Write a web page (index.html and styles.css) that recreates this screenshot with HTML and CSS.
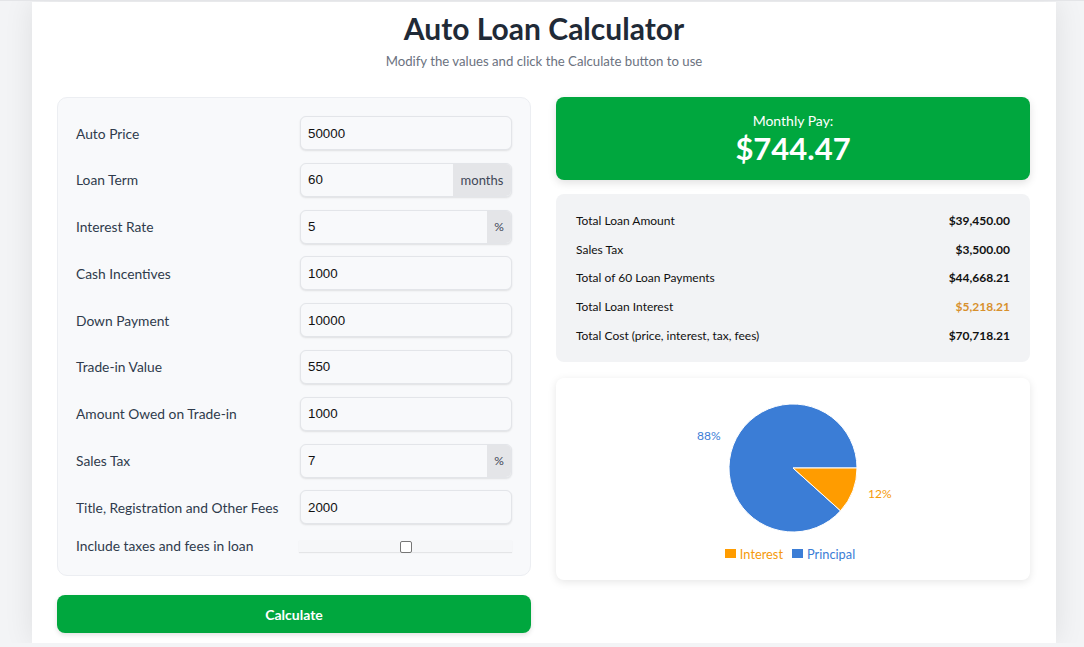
FILE: index.html
```html
<!DOCTYPE html>
<html lang="en">
<head>
<meta charset="utf-8">
<title>Auto Loan Calculator</title>
<link rel="stylesheet" href="styles.css">
</head>
<body>
<main class="page">
  <header class="head">
    <h1 class="title">Auto Loan Calculator</h1>
    <p class="subtitle">Modify the values and click the Calculate button to use</p>
  </header>
  <div class="columns">
    <section class="left">
      <div class="form">
        <label class="lbl">Auto Price</label>
        <div class="field"><span class="val">50000</span></div>
        <label class="lbl">Loan Term</label>
        <div class="field group"><span class="val">60</span><span class="addon months">months</span></div>
        <label class="lbl">Interest Rate</label>
        <div class="field group"><span class="val">5</span><span class="addon pct">%</span></div>
        <label class="lbl">Cash Incentives</label>
        <div class="field"><span class="val">1000</span></div>
        <label class="lbl">Down Payment</label>
        <div class="field"><span class="val">10000</span></div>
        <label class="lbl">Trade-in Value</label>
        <div class="field"><span class="val">550</span></div>
        <label class="lbl">Amount Owed on Trade-in</label>
        <div class="field"><span class="val">1000</span></div>
        <label class="lbl">Sales Tax</label>
        <div class="field group"><span class="val">7</span><span class="addon pct">%</span></div>
        <label class="lbl">Title, Registration and Other Fees</label>
        <div class="field"><span class="val">2000</span></div>
        <label class="lbl">Include taxes and fees in loan</label>
        <div class="checkwrap"><span class="checkbox"></span></div>
      </div>
      <button class="calc">Calculate</button>
    </section>
    <section class="right">
      <div class="monthly">
        <div class="m-label">Monthly Pay:</div>
        <div class="m-value">$744.47</div>
      </div>
      <div class="details">
        <div class="row"><span>Total Loan Amount</span><b>$39,450.00</b></div>
        <div class="row"><span>Sales Tax</span><b>$3,500.00</b></div>
        <div class="row"><span>Total of 60 Loan Payments</span><b>$44,668.21</b></div>
        <div class="row"><span>Total Loan Interest</span><b class="orange">$5,218.21</b></div>
        <div class="row"><span>Total Cost (price, interest, tax, fees)</span><b>$70,718.21</b></div>
      </div>
      <div class="chart">
        <svg class="pie" width="474" height="166" viewBox="0 0 474 166">
          <path d="M237 90 L301 90 A64 64 0 1 0 284.56 132.82 Z" fill="#3b7dd6" stroke="#fff" stroke-width="1"/>
          <path d="M237 90 L301 90 A64 64 0 0 1 284.56 132.82 Z" fill="#ff9c00" stroke="#fff" stroke-width="1"/>
          <text x="141" y="62" class="plabel blue-t">88%</text>
          <text x="312" y="120" class="plabel orange-t">12%</text>
        </svg>
        <div class="legend">
          <span class="swatch sw-orange"></span><span class="lg-orange">Interest</span>
          <span class="swatch sw-blue"></span><span class="lg-blue">Principal</span>
        </div>
      </div>
    </section>
  </div>
</main>
</body>
</html>
```
FILE: styles.css
```css
* { box-sizing: border-box; }
html, body { margin: 0; padding: 0; }
body {
  background: #f3f4f6;
  font-family: "Lato", "Noto Sans", sans-serif;
  border-top: 1px solid #e4e5e8;
  padding-left: 4px;
}
.page {
  width: 1024px;
  margin: 1px auto 0;
  background: #fff;
  box-shadow: 0 0 28px rgba(0,0,0,0.09);
  padding: 0 25px 10px;
}
.head { text-align: center; padding-top: 10px; }
.title {
  margin: 0;
  font-size: 30px;
  line-height: 32px;
  font-weight: 700;
  color: #1f2a37;
}
.subtitle {
  margin: 9px 0 0;
  font-size: 13.2px;
  line-height: 16px;
  color: #6b7280;
}
.columns {
  display: grid;
  grid-template-columns: 474px 474px;
  gap: 25px;
  margin-top: 28px;
  align-items: start;
}
.left { display: flex; flex-direction: column; gap: 19px; }
.form {
  background: #f8f9fb;
  border: 1px solid #eceef2;
  border-radius: 10px;
  padding: 18px 18px 21px;
  display: grid;
  grid-template-columns: 212px 212px;
  column-gap: 12px;
  row-gap: 12.8px;
  align-items: center;
}
.lbl {
  font-size: 13.8px;
  color: #2f3b4c;
}
.field {
  height: 34px;
  display: flex;
  align-items: stretch;
  background: #f8f9fb;
  border: 1px solid #e3e5e9;
  border-radius: 6px;
  box-shadow: 0 1px 2px rgba(0,0,0,0.1);
  overflow: hidden;
}
.val {
  flex: 1;
  display: flex;
  align-items: center;
  padding-left: 7px;
  font-family: "Liberation Sans", Arial, sans-serif;
  font-size: 13.33px;
  color: #111;
}
.addon {
  display: flex;
  align-items: center;
  justify-content: center;
  background: #e4e5e8;
  color: #3f4756;
  font-size: 13px;
}
.months { width: 58px; }
.pct { width: 24px; font-size: 12px; }
.checkwrap {
  height: 12px;
  display: flex;
  justify-content: center;
  align-items: center;
  background: #f6f7f9;
  box-shadow: 0 1px 1px rgba(0,0,0,0.08);
  margin-left: -1px;
  margin-top: 1px;
}
.checkbox {
  width: 12px;
  height: 12px;
  border: 1px solid #767676;
  border-radius: 2px;
  background: #fff;
  margin-top: 1px;
}
.calc {
  height: 38px;
  border: 0;
  border-radius: 8px;
  background: #00a73e;
  color: #fff;
  font-family: inherit;
  font-size: 14px;
  font-weight: 700;
  box-shadow: 0 2px 5px rgba(0,0,0,0.12);
}
.right { display: flex; flex-direction: column; gap: 14px; }
.monthly {
  height: 83px;
  background: #00a73e;
  border-radius: 8px;
  color: #fff;
  text-align: center;
  padding-top: 15px;
  box-shadow: 0 3px 8px rgba(0,0,0,0.12);
}
.m-label { font-size: 14px; line-height: 18px; }
.m-value { font-size: 31px; font-weight: 700; line-height: 34px; margin-top: 1px; }
.details {
  background: #f2f3f5;
  border-radius: 8px;
  padding: 12px 20px;
}
.row {
  display: flex;
  justify-content: space-between;
  align-items: center;
  height: 28.75px;
  font-size: 12px;
  color: #111;
}
.row b { font-weight: 700; }
.row b.orange { color: #d8902c; }
.chart {
  margin-top: 2px;
  background: #fff;
  border-radius: 8px;
  box-shadow: 0 2px 8px rgba(0,0,0,0.1);
  padding-bottom: 16px;
}
.pie { display: block; }
.plabel { font-family: "Lato", sans-serif; font-size: 12px; }
.blue-t { fill: #3b7dd6; }
.orange-t { fill: #f59a0a; }
.legend {
  height: 20px;
  display: flex;
  justify-content: center;
  align-items: center;
  font-size: 12.8px;
  padding-right: 6px;
}
.swatch { width: 11px; height: 9px; display: inline-block; margin-right: 4px; }
.sw-orange { background: #ff9c00; }
.sw-blue { background: #3b7dd6; margin-left: 9px; }
.lg-orange { color: #f59a0a; }
.lg-blue { color: #3b7dd6; }
```
